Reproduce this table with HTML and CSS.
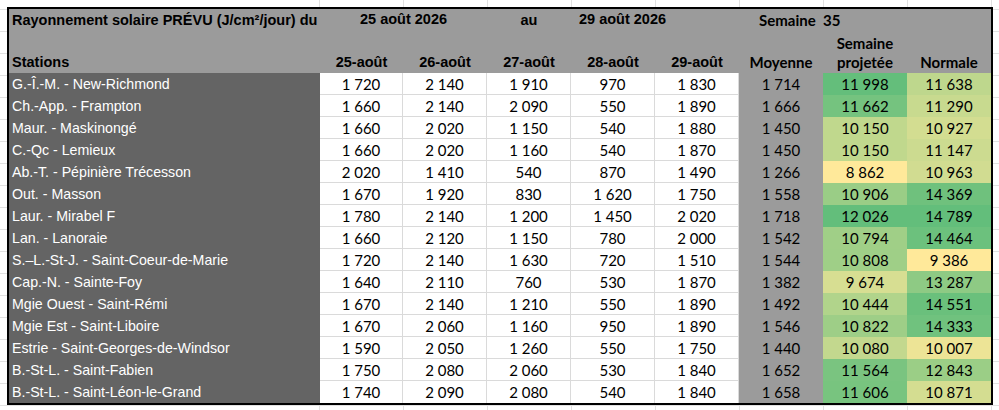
FILE: index.html
```html
<!DOCTYPE html>
<html lang="fr">
<head>
<meta charset="utf-8">
<title>Rayonnement solaire prévu</title>
<link rel="stylesheet" href="styles.css">
</head>
<body>
<div class="sheet">
  <div class="head">
    <div class="h-title">Rayonnement solaire PRÉVU (J/cm²/jour) du</div>
    <div class="h-from">25 août 2026</div>
    <div class="h-au">au</div>
    <div class="h-to">29 août 2026</div>
    <div class="h-week">Semaine  35</div>
    <div class="h-sem">Semaine</div>
    <div class="h-stations">Stations</div>
    <div class="h-day c2">25-août</div>
    <div class="h-day c3">26-août</div>
    <div class="h-day c4">27-août</div>
    <div class="h-day c5">28-août</div>
    <div class="h-day c6">29-août</div>
    <div class="h-cal c7">Moyenne</div>
    <div class="h-cal c8">projetée</div>
    <div class="h-cal c9">Normale</div>
  </div>

  <div class="row"><div class="st">G.-Î.-M. - New-Richmond</div><div class="d">1 720</div><div class="d">2 140</div><div class="d">1 910</div><div class="d">970</div><div class="d">1 830</div><div class="avg">1 714</div><div class="sc" style="background:rgb(100,190,123)">11 998</div><div class="sc" style="background:rgb(190,215,141)">11 638</div></div>
  <div class="row"><div class="st">Ch.-App. - Frampton</div><div class="d">1 660</div><div class="d">2 140</div><div class="d">2 090</div><div class="d">550</div><div class="d">1 890</div><div class="avg">1 666</div><div class="sc" style="background:rgb(117,195,127)">11 662</div><div class="sc" style="background:rgb(200,218,143)">11 290</div></div>
  <div class="row"><div class="st">Maur. - Maskinongé</div><div class="d">1 660</div><div class="d">2 020</div><div class="d">1 150</div><div class="d">540</div><div class="d">1 880</div><div class="avg">1 450</div><div class="sc" style="background:rgb(192,216,141)">10 150</div><div class="sc" style="background:rgb(211,221,145)">10 927</div></div>
  <div class="row"><div class="st">C.-Qc - Lemieux</div><div class="d">1 660</div><div class="d">2 020</div><div class="d">1 160</div><div class="d">540</div><div class="d">1 870</div><div class="avg">1 450</div><div class="sc" style="background:rgb(192,216,141)">10 150</div><div class="sc" style="background:rgb(204,219,144)">11 147</div></div>
  <div class="row"><div class="st">Ab.-T. - Pépinière Trécesson</div><div class="d">2 020</div><div class="d">1 410</div><div class="d">540</div><div class="d">870</div><div class="d">1 490</div><div class="avg">1 266</div><div class="sc" style="background:rgb(255,233,154)">8 862</div><div class="sc" style="background:rgb(209,220,145)">10 963</div></div>
  <div class="row"><div class="st">Out. - Masson</div><div class="d">1 670</div><div class="d">1 920</div><div class="d">830</div><div class="d">1 620</div><div class="d">1 750</div><div class="avg">1 558</div><div class="sc" style="background:rgb(154,205,134)">10 906</div><div class="sc" style="background:rgb(111,193,125)">14 369</div></div>
  <div class="row"><div class="st">Laur. - Mirabel F</div><div class="d">1 780</div><div class="d">2 140</div><div class="d">1 200</div><div class="d">1 450</div><div class="d">2 020</div><div class="avg">1 718</div><div class="sc" style="background:rgb(99,190,123)">12 026</div><div class="sc" style="background:rgb(99,190,123)">14 789</div></div>
  <div class="row"><div class="st">Lan. - Lanoraie</div><div class="d">1 660</div><div class="d">2 120</div><div class="d">1 150</div><div class="d">780</div><div class="d">2 000</div><div class="avg">1 542</div><div class="sc" style="background:rgb(160,207,135)">10 794</div><div class="sc" style="background:rgb(108,193,125)">14 464</div></div>
  <div class="row"><div class="st">S.–L.-St-J. - Saint-Coeur-de-Marie</div><div class="d">1 720</div><div class="d">2 140</div><div class="d">1 630</div><div class="d">720</div><div class="d">1 510</div><div class="avg">1 544</div><div class="sc" style="background:rgb(159,207,135)">10 808</div><div class="sc" style="background:rgb(255,233,154)">9 386</div></div>
  <div class="row"><div class="st">Cap.-N. - Sainte-Foy</div><div class="d">1 640</div><div class="d">2 110</div><div class="d">760</div><div class="d">530</div><div class="d">1 870</div><div class="avg">1 382</div><div class="sc" style="background:rgb(215,222,146)">9 674</div><div class="sc" style="background:rgb(142,202,132)">13 287</div></div>
  <div class="row"><div class="st">Mgie Ouest - Saint-Rémi</div><div class="d">1 670</div><div class="d">2 140</div><div class="d">1 210</div><div class="d">550</div><div class="d">1 890</div><div class="avg">1 492</div><div class="sc" style="background:rgb(177,212,139)">10 444</div><div class="sc" style="background:rgb(106,192,124)">14 551</div></div>
  <div class="row"><div class="st">Mgie Est - Saint-Liboire</div><div class="d">1 670</div><div class="d">2 060</div><div class="d">1 160</div><div class="d">950</div><div class="d">1 890</div><div class="avg">1 546</div><div class="sc" style="background:rgb(158,206,135)">10 822</div><div class="sc" style="background:rgb(112,194,126)">14 333</div></div>
  <div class="row"><div class="st">Estrie - Saint-Georges-de-Windsor</div><div class="d">1 590</div><div class="d">2 050</div><div class="d">1 260</div><div class="d">550</div><div class="d">1 750</div><div class="avg">1 440</div><div class="sc" style="background:rgb(195,216,142)">10 080</div><div class="sc" style="background:rgb(237,228,150)">10 007</div></div>
  <div class="row"><div class="st">B.-St-L. - Saint-Fabien</div><div class="d">1 750</div><div class="d">2 080</div><div class="d">2 060</div><div class="d">530</div><div class="d">1 840</div><div class="avg">1 652</div><div class="sc" style="background:rgb(122,196,128)">11 564</div><div class="sc" style="background:rgb(155,206,134)">12 843</div></div>
  <div class="row"><div class="st">B.-St-L. - Saint-Léon-le-Grand</div><div class="d">1 740</div><div class="d">2 090</div><div class="d">2 080</div><div class="d">540</div><div class="d">1 840</div><div class="avg">1 658</div><div class="sc" style="background:rgb(120,196,127)">11 606</div><div class="sc" style="background:rgb(212,221,145)">10 871</div></div>
</div>
</body>
</html>
```

FILE: styles.css
```css
html, body {
  margin: 0;
  padding: 0;
}

body {
  width: 999px;
  height: 410px;
  overflow: hidden;
  box-sizing: border-box;
  padding: 7px 0 0 7px;
  font-family: "Liberation Sans", Arial, sans-serif;
  font-size: 14.5px;
  color: #000;
  background:
    repeating-linear-gradient(90deg, #e1e1e1 0 1px, transparent 1px 84px) 319px 0 / 680px 100% no-repeat,
    repeating-linear-gradient(180deg, #e1e1e1 0 1px, transparent 1px 22px) 0 9px / 100% 100% no-repeat,
    #ffffff;
}

.sheet {
  width: 982px;
  border: 2px solid #000;
  background: #fff;
}

.head,
.row {
  display: grid;
  grid-template-columns: 311px 83px repeat(7, 84px);
}

.head {
  grid-template-rows: 22px 21px 21px;
  background: #9b9b9b;
  font-weight: bold;
}

.head > div {
  white-space: pre;
  overflow: visible;
}

.h-title {
  grid-row: 1;
  grid-column: 1;
  line-height: 22px;
  padding-left: 3px;
}

.h-from {
  grid-row: 1;
  grid-column: 2 / span 2;
  text-align: center;
  line-height: 20px;
}

.h-au {
  grid-row: 1;
  grid-column: 4;
  text-align: center;
  line-height: 22px;
}

.h-to {
  grid-row: 1;
  grid-column: 5;
  text-align: center;
  line-height: 20px;
  padding-left: 8px;
}

.h-week {
  grid-row: 1;
  grid-column: 7 / span 2;
  font-family: Lato, "Liberation Sans", sans-serif;
  font-size: 15px;
  line-height: 23px;
  padding-left: 20px;
}

.h-sem {
  grid-row: 2;
  grid-column: 8;
  text-align: center;
  font-family: Lato, "Liberation Sans", sans-serif;
  font-size: 15px;
  line-height: 24px;
}

.h-stations {
  grid-row: 3;
  grid-column: 1;
  padding-left: 3px;
  line-height: 21px;
}

.h-day,
.h-cal {
  grid-row: 3;
  text-align: center;
  line-height: 21px;
}

.h-cal {
  font-family: Lato, "Liberation Sans", sans-serif;
  font-size: 15px;
}

.c2 { grid-column: 2; }
.c3 { grid-column: 3; }
.c4 { grid-column: 4; }
.c5 { grid-column: 5; }
.c6 { grid-column: 6; }
.c7 { grid-column: 7; }
.c8 { grid-column: 8; }
.c9 { grid-column: 9; }

.row {
  height: 22px;
}

.row > div {
  box-sizing: border-box;
  height: 22px;
  line-height: 22px;
  white-space: nowrap;
}

.st {
  background: #646464;
  color: #fff;
  padding-left: 3px;
  font-size: 14.2px;
}

.d,
.avg,
.sc {
  font-family: Lato, "Liberation Sans", sans-serif;
  font-size: 15px;
  text-align: center;
}

.d {
  background: #fff;
  border-right: 1px solid #dadada;
  border-bottom: 1px solid #dadada;
  line-height: 22px;
}

.row:last-child .d {
  border-bottom: none;
}

.avg {
  background: #9b9b9b;
}
```
